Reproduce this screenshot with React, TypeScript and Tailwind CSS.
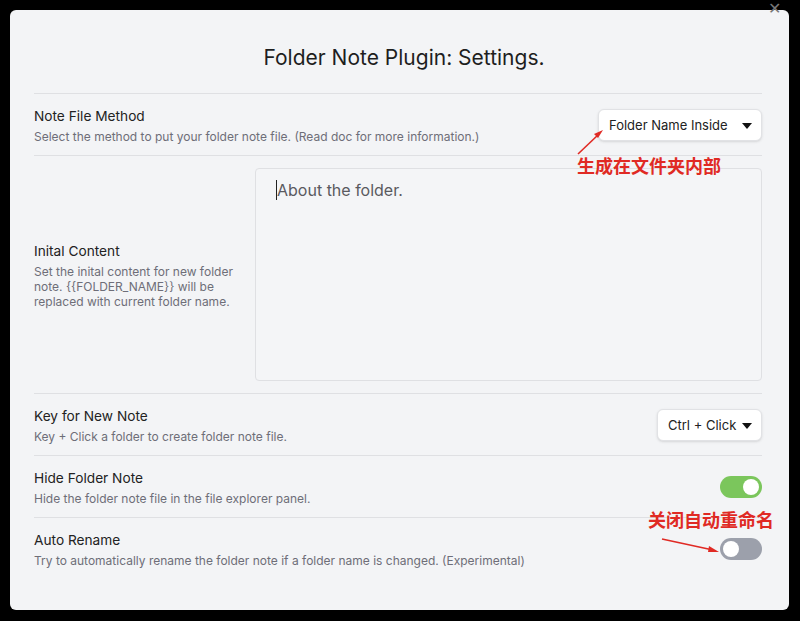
import React, { useState } from 'react';

const Caret = () => (
  <svg width="10" height="6" viewBox="0 0 10 6" className="flex-shrink-0">
    <path d="M0 0 L10 0 L5 6 Z" fill="#111" />
  </svg>
);

const Toggle = ({ on }: { on: boolean }) => (
  <div className={`w-[42px] h-[22px] rounded-full flex items-center px-[3px] ${on ? 'bg-[#7bc65c] justify-end' : 'bg-[#9ca0ab] justify-start'}`}>
    <div className="w-[16px] h-[16px] rounded-full bg-white" />
  </div>
);

const Info = ({ name, desc, className = '' }: { name: string; desc: React.ReactNode; className?: string }) => (
  <div className={`flex flex-col ${className}`}>
    <div className="text-[13.7px] leading-[20px] text-[#222]">{name}</div>
    <div className="mt-[3px] text-[12px] leading-[15px] text-[#6e6e78]">{desc}</div>
  </div>
);

export default function App() {
  const [content] = useState('About the folder.');
  return (
    <div className="w-[800px] h-[621px] bg-black p-[10px] pr-[11px] pb-[11px]" style={{ fontFamily: 'Inter, "Noto Sans CJK SC", sans-serif' }}>
      <div className="relative w-full h-full bg-[#f3f4f6] rounded-[6px] pl-6 pr-[27px]">
        <div className="absolute -top-[10px] right-[8px] text-[#777] text-[16px] leading-none">✕</div>

        <h1 className="pt-[34px] pl-[12px] text-center text-[21px] leading-[28px] text-[#1e1e1e] font-normal mb-[21px]">Folder Note Plugin: Settings.</h1>

        <div className="border-t border-[#dfe0e3] flex items-center justify-between pt-3 pb-[11px]">
          <Info name="Note File Method" desc="Select the method to put your folder note file. (Read doc for more information.)" />
          <div className="w-[164px] h-[32px] bg-white border border-[#e1e2e5] rounded-[6px] shadow-sm flex items-center justify-between pl-[10px] pr-[9px] pt-[1px] text-[13px] text-[#222]">
            <span>Folder Name Inside</span>
            <Caret />
          </div>
        </div>

        <div className="border-t border-[#dfe0e3] flex items-center gap-5 pt-[12px] pb-[12px]">
          <Info
            className="w-[201px] flex-shrink-0"
            name="Inital Content"
            desc={<>Set the inital content for new folder note. {'{{FOLDER_NAME}}'} will be replaced with current folder name.</>}
          />
          <div className="flex-1 h-[213px] border border-[#dfe0e3] rounded-[4px] bg-[#f4f5f7] pl-[20px] pt-[9px] text-[16px] text-[#5a5a5f]">
            <span className="border-l border-[#222]">{content}</span>
          </div>
        </div>

        <div className="border-t border-[#dfe0e3] flex items-center justify-between pt-3 pb-[11px]">
          <Info name="Key for New Note" desc="Key + Click a folder to create folder note file." />
          <div className="w-[105px] h-[32px] bg-white border border-[#e1e2e5] rounded-[6px] shadow-sm flex items-center justify-between pl-[10px] pr-[9px] pt-[2px] text-[13px] text-[#222]">
            <span>Ctrl + Click</span>
            <Caret />
          </div>
        </div>

        <div className="border-t border-[#dfe0e3] flex items-center justify-between pt-3 pb-[11px]">
          <Info name="Hide Folder Note" desc="Hide the folder note file in the file explorer panel." />
          <Toggle on />
        </div>

        <div className="border-t border-[#dfe0e3] flex items-center justify-between pt-3 pb-[11px]">
          <Info name="Auto Rename" desc="Try to automatically rename the folder note if a folder name is changed. (Experimental)" />
          <Toggle on={false} />
        </div>

        {/* annotations */}
        <div className="absolute left-[567px] top-[145px] text-[18px] leading-[24px] font-bold text-[#e02a24]">生成在文件夹内部</div>
        <svg className="absolute left-[555px] top-[110px]" width="60" height="50" viewBox="0 0 60 50">
          <line x1="13" y1="34" x2="34" y2="14" stroke="#e02a24" strokeWidth="1.6" />
          <path d="M38 10 L29 14 L33 18 Z" fill="#e02a24" />
        </svg>
        <div className="absolute left-[638px] top-[500px] text-[18px] leading-[22px] font-bold text-[#e02a24]">关闭自动重命名</div>
        <svg className="absolute left-[645px] top-[521px]" width="70" height="30" viewBox="0 0 70 30">
          <line x1="7" y1="8" x2="58" y2="19" stroke="#e02a24" strokeWidth="1.6" />
          <path d="M64 21 L54 15 L53 21 Z" fill="#e02a24" />
        </svg>
      </div>
    </div>
  );
}
